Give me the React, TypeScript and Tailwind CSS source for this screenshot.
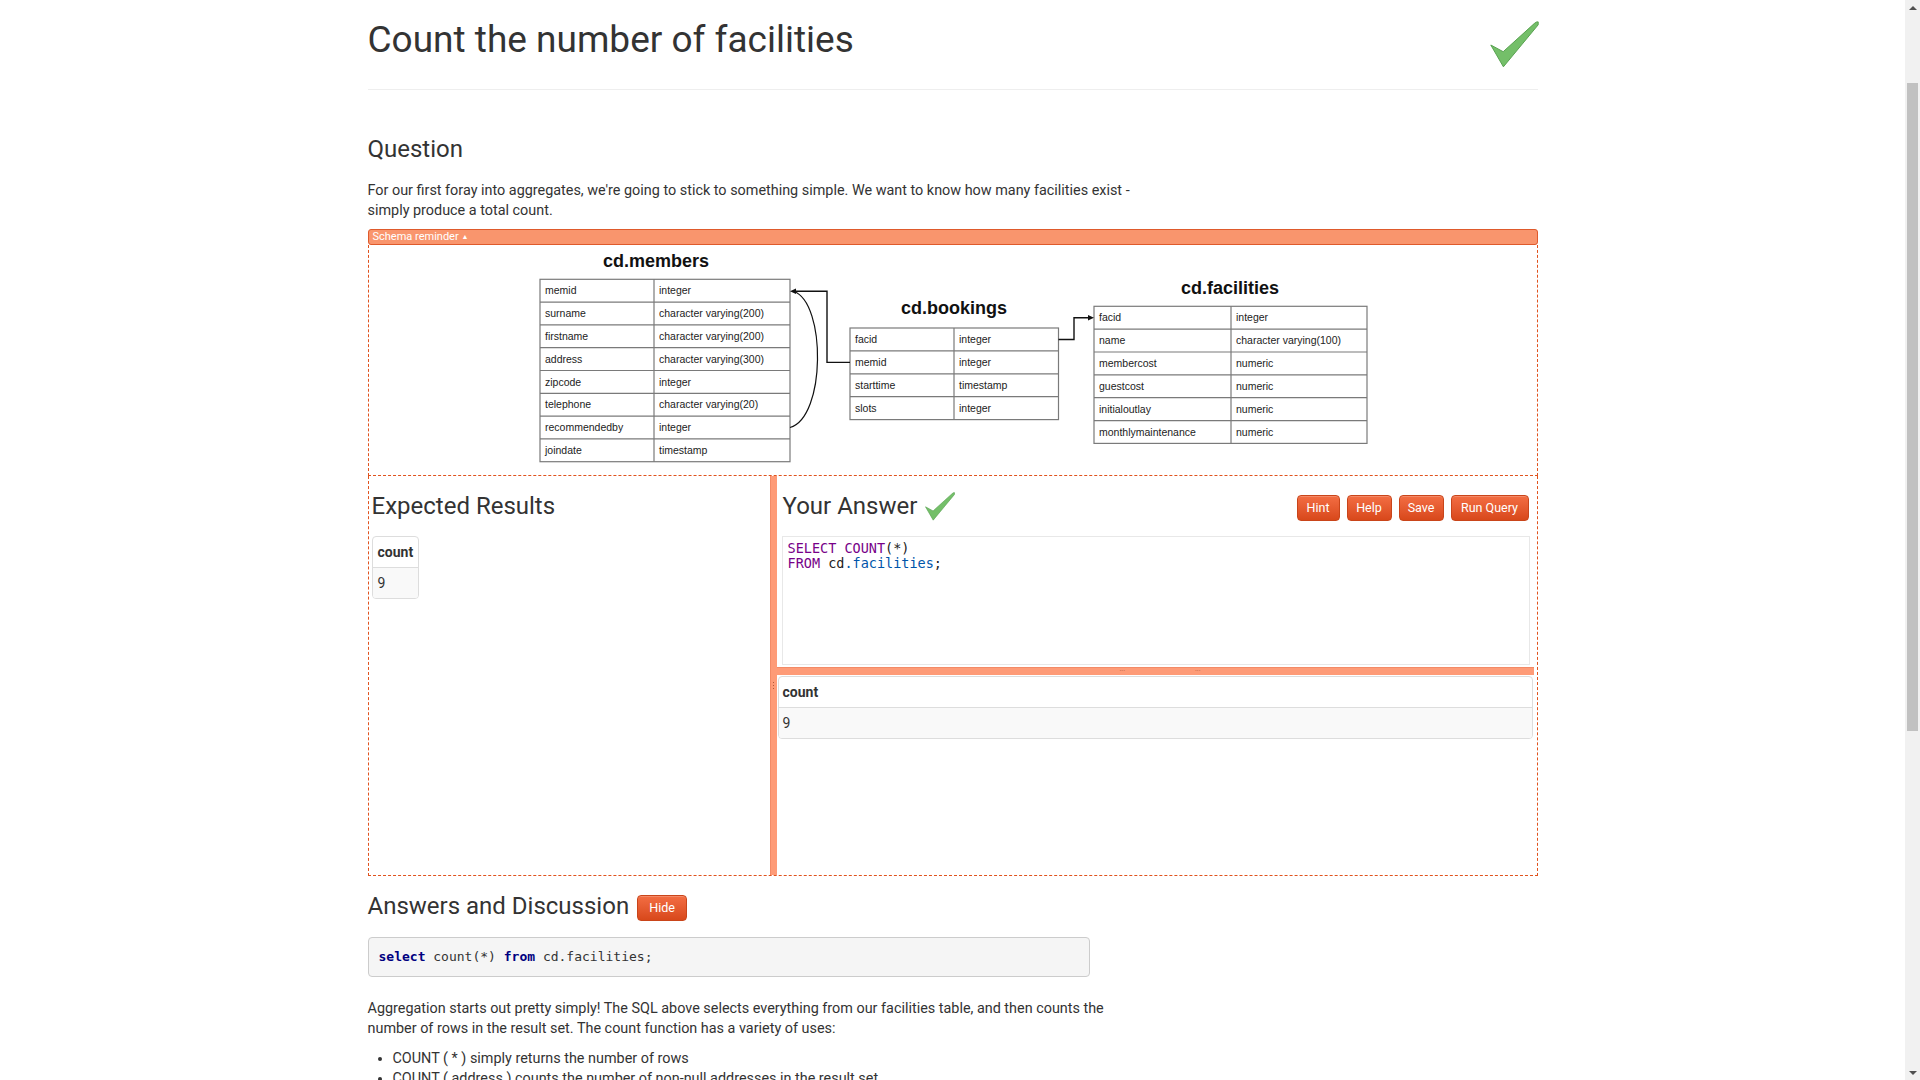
import React from 'react';

const Check = ({ className }: { className?: string }) => (
  <svg viewBox="0 0 49 47" className={className}>
    <path
      d="M0.8 24 L13.2 30.7 L44.2 2.6 Q46.5 0.4 48.2 0.9 L48.2 3.8 L13.4 45.8 Z"
      fill="#74bf69"
      stroke="#58a150"
      strokeWidth="1"
      strokeLinejoin="round"
    />
  </svg>
);

type Row = [string, string];

const members: Row[] = [
  ['memid', 'integer'],
  ['surname', 'character varying(200)'],
  ['firstname', 'character varying(200)'],
  ['address', 'character varying(300)'],
  ['zipcode', 'integer'],
  ['telephone', 'character varying(20)'],
  ['recommendedby', 'integer'],
  ['joindate', 'timestamp'],
];
const bookings: Row[] = [
  ['facid', 'integer'],
  ['memid', 'integer'],
  ['starttime', 'timestamp'],
  ['slots', 'integer'],
];
const facilities: Row[] = [
  ['facid', 'integer'],
  ['name', 'character varying(100)'],
  ['membercost', 'numeric'],
  ['guestcost', 'numeric'],
  ['initialoutlay', 'numeric'],
  ['monthlymaintenance', 'numeric'],
];

function DTable({
  x,
  y,
  w1,
  w2,
  rh,
  rows,
  title,
  tx,
  ty,
}: {
  x: number;
  y: number;
  w1: number;
  w2: number;
  rh: number;
  rows: Row[];
  title: string;
  tx: number;
  ty: number;
}) {
  const h = rh * rows.length;
  return (
    <g>
      <text
        x={tx}
        y={ty}
        textAnchor="middle"
        fontFamily="Liberation Sans, Arial, sans-serif"
        fontWeight="bold"
        fontSize="18"
        fill="#111"
      >
        {title}
      </text>
      <rect x={x} y={y} width={w1 + w2} height={h} fill="#fff" stroke="#7a7a7a" strokeWidth="1.2" />
      <line x1={x + w1} y1={y} x2={x + w1} y2={y + h} stroke="#7a7a7a" strokeWidth="1.2" />
      {rows.map((r, i) => (
        <g key={i}>
          {i > 0 && (
            <line x1={x} y1={y + rh * i} x2={x + w1 + w2} y2={y + rh * i} stroke="#7a7a7a" strokeWidth="1.2" />
          )}
          <text
            x={x + 5}
            y={y + rh * i + 15}
            fontFamily="Liberation Sans, Arial, sans-serif"
            fontSize="10.5"
            fill="#222"
          >
            {r[0]}
          </text>
          <text
            x={x + w1 + 5}
            y={y + rh * i + 15}
            fontFamily="Liberation Sans, Arial, sans-serif"
            fontSize="10.5"
            fill="#222"
          >
            {r[1]}
          </text>
        </g>
      ))}
    </g>
  );
}

function SchemaDiagram() {
  return (
    <svg width="1168" height="230" viewBox="0 0 1168 230" className="block">
      <DTable x={171} y={34.3} w1={114} w2={136} rh={22.8} rows={members} title="cd.members" tx={287} ty={22} />
      <DTable x={481} y={83} w1={104} w2={104.5} rh={22.9} rows={bookings} title="cd.bookings" tx={585} ty={69} />
      <DTable x={725} y={61.3} w1={137} w2={136} rh={22.85} rows={facilities} title="cd.facilities" tx={861} ty={49} />
      {/* self reference curve */}
      <path d="M421 182.5 C457 172, 457 58, 425 46.5" fill="none" stroke="#111" strokeWidth="1.2" />
      {/* bookings.memid -> members.memid */}
      <path d="M481 117.4 L458 117.4 L458 46.2 L425 46.2" fill="none" stroke="#111" strokeWidth="1.4" />
      <polygon points="421,46.2 427,43.4 427,49" fill="#111" />
      {/* bookings.facid -> facilities.facid */}
      <path d="M689.5 94.5 L705 94.5 L705 72.7 L720 72.7" fill="none" stroke="#111" strokeWidth="1.4" />
      <polygon points="725,72.7 719,69.9 719,75.5" fill="#111" />
    </svg>
  );
}

const btn =
  'h-[26px] rounded-[4px] border border-[#c9451a] bg-linear-to-b from-[#f36d42] to-[#d8481a] text-center text-[12.5px] leading-[24px] text-white shadow-[inset_0_1px_0_rgba(255,255,255,0.2)]';

export default function App() {
  return (
    <div className="flex h-screen w-full overflow-hidden bg-white font-['Roboto',sans-serif] text-[#333]">
      <div className="min-w-0 flex-1 overflow-hidden">
        <div className="mx-auto w-[1170px]">
          {/* header */}
          <header className="flex h-[90px] items-start justify-between border-b border-[#eee]">
            <h1 className="mt-[20px] text-[37px] font-normal leading-[40px]">Count the number of facilities</h1>
            <Check className="mt-[21px] mr-[-1px] h-[47px] w-[49px]" />
          </header>

          {/* question */}
          <h2 className="mt-[44px] text-[24px] font-normal leading-[30px]">Question</h2>
          <p className="mt-[17px] max-w-[780px] text-[14.4px] leading-[19.5px]">
            For our first foray into aggregates, we're going to stick to something simple. We want to know how many
            facilities exist - simply produce a total count.
          </p>

          {/* schema reminder */}
          <div className="mt-[9px] h-[16px] rounded-[3px] border border-[#df5a2c] bg-[#f9956d] pl-[4px] text-[11px] leading-[14px] text-white">
            Schema reminder <span className="align-middle text-[7px]">▲</span>
          </div>
          <div className="h-[231px] border-x border-b border-dashed border-[#e0531e]">
            <SchemaDiagram />
          </div>

          {/* results area */}
          <div className="flex h-[400px] border-x border-b border-dashed border-[#e0531e]">
            <div className="w-[401px] pl-[3px] pt-[15px]">
              <h3 className="text-[24px] font-normal leading-[30px]">Expected Results</h3>
              <table className="mt-[15px] border-separate border-spacing-0 overflow-hidden rounded-[4px] border border-[#ddd] text-[14px]">
                <thead>
                  <tr>
                    <th className="h-[30px] px-[5px] text-left font-bold">count</th>
                  </tr>
                </thead>
                <tbody>
                  <tr>
                    <td className="h-[31px] border-t border-[#ddd] bg-[#f9f9f9] px-[5px]">9</td>
                  </tr>
                </tbody>
              </table>
            </div>

            {/* vertical splitter */}
            <div className="flex w-[7px] flex-col items-center justify-center border-l border-[#f38a66] bg-[#fe9b77]">
              <div className="mt-[20px] flex flex-col gap-[2px]">
                <span className="h-[1px] w-[1px] bg-[#b0593a]" />
                <span className="h-[1px] w-[1px] bg-[#b0593a]" />
                <span className="h-[1px] w-[1px] bg-[#b0593a]" />
              </div>
            </div>

            <div className="flex min-w-0 flex-1 flex-col">
              <div className="flex h-[191px] flex-col">
                <div className="flex items-start justify-between pl-[6px] pr-[8px] pt-[15px]">
                  <div className="flex items-center gap-[8px]">
                    <h3 className="text-[24px] font-normal leading-[30px]">Your Answer</h3>
                    <Check className="h-[29px] w-[30px]" />
                  </div>
                  <div className="mt-[4px] flex gap-[7px]">
                    <button className={btn + ' w-[43px]'}>Hint</button>
                    <button className={btn + ' w-[45px]'}>Help</button>
                    <button className={btn + ' w-[45px]'}>Save</button>
                    <button className={btn + ' w-[78px]'}>Run Query</button>
                  </div>
                </div>
                <div className="ml-[5px] mr-[7px] mt-[15px] h-[129px] border border-[#e8e8e8] bg-white pl-[5px] pt-[4px] font-['DejaVu_Sans_Mono',monospace] text-[13.5px] leading-[14.5px]">
                  <div>
                    <span className="text-[#770088]">SELECT COUNT</span>
                    <span className="text-[#222]">(*)</span>
                  </div>
                  <div>
                    <span className="text-[#770088]">FROM</span> <span className="text-[#222]">cd</span>
                    <span className="text-[#0055aa]">.facilities</span>
                    <span className="text-[#222]">;</span>
                  </div>
                </div>
              </div>
              {/* horizontal splitter */}
              <div className="mr-[3px] flex h-[8px] items-center border-t border-[#f38a66] bg-[#fe9b77]">
                <span className="ml-[343px] text-[7px] leading-[7px] text-[#b0593a]">···</span>
                <span className="ml-[70px] text-[7px] leading-[7px] text-[#b0593a]">···</span>
              </div>
              <div className="ml-[1px] mr-[4px] mt-[1px]">
                <table className="w-full border-separate border-spacing-0 overflow-hidden rounded-[4px] border border-[#ddd] text-[14px]">
                  <thead>
                    <tr>
                      <th className="h-[30px] px-[4px] text-left font-bold">count</th>
                    </tr>
                  </thead>
                  <tbody>
                    <tr>
                      <td className="h-[31px] border-t border-[#ddd] bg-[#f9f9f9] px-[4px]">9</td>
                    </tr>
                  </tbody>
                </table>
              </div>
            </div>
          </div>

          {/* answers and discussion */}
          <div className="mt-[15px] flex items-end">
            <h2 className="text-[24px] font-normal leading-[30px]">Answers and Discussion</h2>
            <button className={btn + ' ml-[8px] w-[50px]'}>Hide</button>
          </div>
          <div className="mt-[16px] flex h-[40px] w-[722px] items-center rounded-[4px] border border-[#ccc] bg-[#f5f5f5] pl-[10px] font-['DejaVu_Sans_Mono',monospace] text-[13px] text-[#333]">
            <span className="font-bold text-[#000080]">select</span>&nbsp;count(*)&nbsp;
            <span className="font-bold text-[#000080]">from</span>&nbsp;cd.facilities;
          </div>
          <p className="mt-[22px] max-w-[780px] text-[14.4px] leading-[19.5px]">
            Aggregation starts out pretty simply! The SQL above selects everything from our facilities table, and then
            counts the number of rows in the result set. The count function has a variety of uses:
          </p>
          <ul className="mt-[11px] list-disc pl-[25px] text-[14.4px] leading-[19.5px]">
            <li>COUNT ( * ) simply returns the number of rows</li>
            <li>COUNT ( address ) counts the number of non-null addresses in the result set.</li>
            <li>Finally, COUNT ( DISTINCT address ) counts the number of different addresses in the facilities table.</li>
          </ul>
        </div>
      </div>

      {/* scrollbar */}
      <div className="flex w-[15px] flex-col bg-[#f1f1f1]">
        <div className="flex h-[15px] items-center justify-center">
          <div className="h-0 w-0 border-x-[4px] border-b-[4px] border-x-transparent border-b-[#505050]" />
        </div>
        <div className="h-[68px]" />
        <div className="mx-[2px] h-[648px] bg-[#c1c1c1]" />
        <div className="flex-1" />
        <div className="flex h-[15px] items-center justify-center">
          <div className="h-0 w-0 border-x-[4px] border-t-[4px] border-x-transparent border-t-[#505050]" />
        </div>
      </div>
    </div>
  );
}
